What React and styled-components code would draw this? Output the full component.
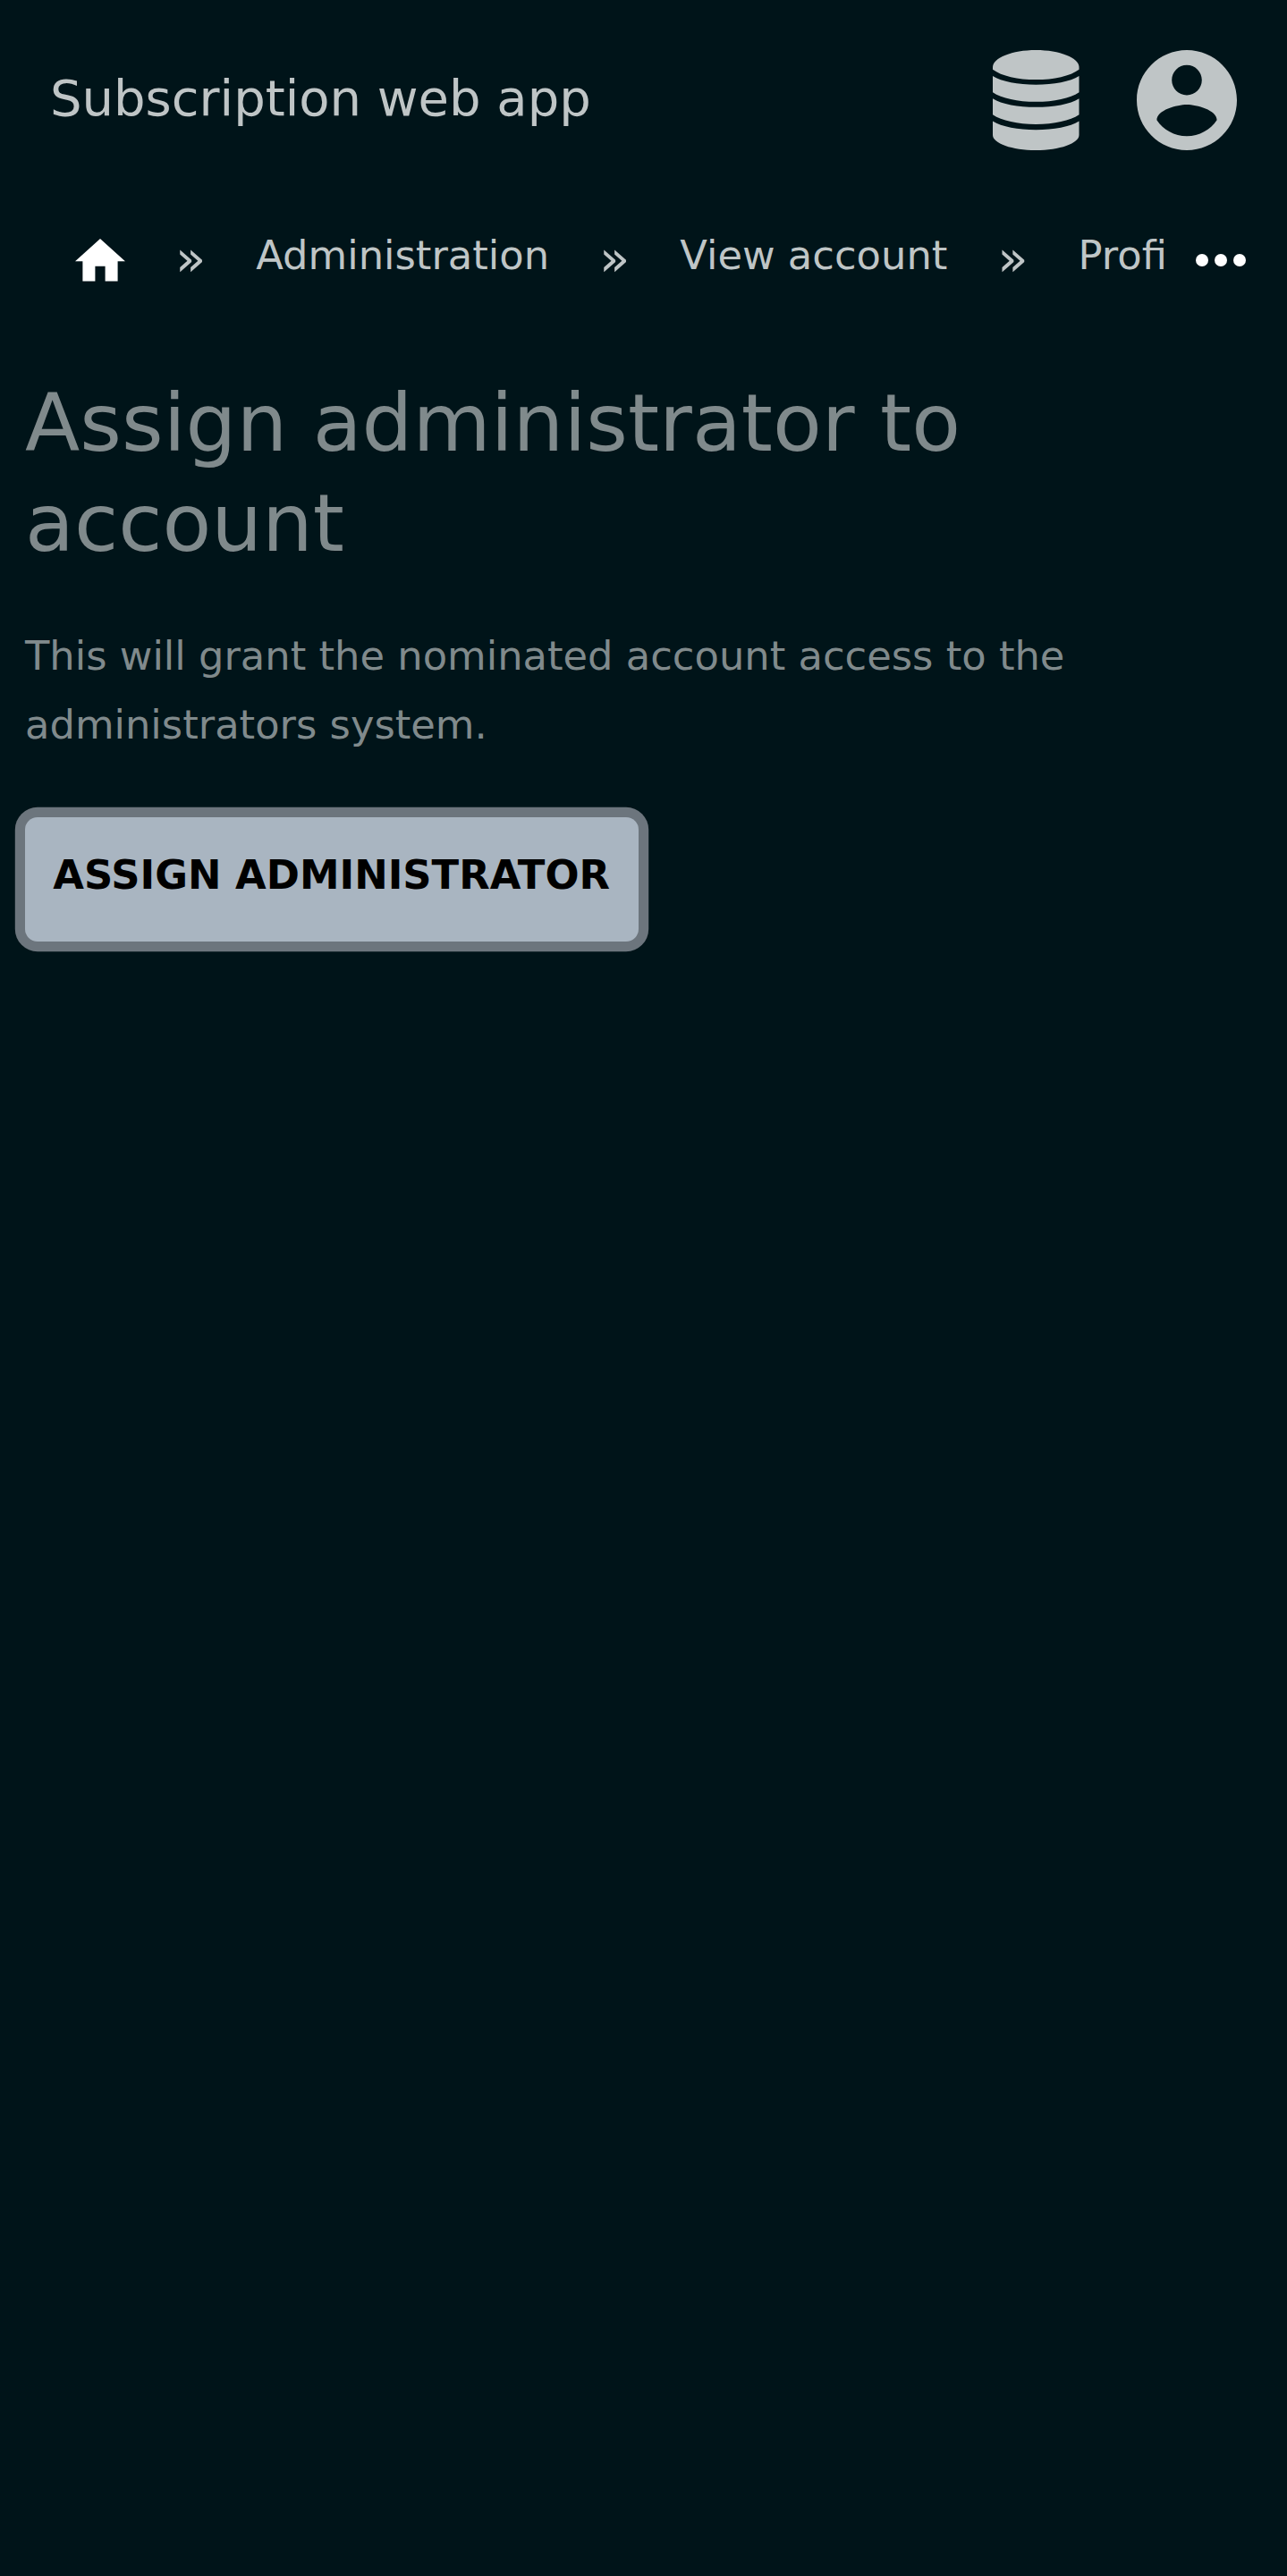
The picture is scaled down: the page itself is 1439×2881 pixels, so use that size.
import React from "react";
import styled, { createGlobalStyle } from "styled-components";

const GlobalStyle = createGlobalStyle`
  *, *::before, *::after { box-sizing: border-box; }
  html { background: #001419; }
  body {
    margin: 0;
    background: #001419;
    color: #808a8c;
    font-family: "DejaVu Sans", sans-serif;
    font-size: 44.8px;
    line-height: 77px;
  }
`;

const Page = styled.div`
  display: flex;
  flex-direction: column;
  min-height: 100vh;
`;

const Header = styled.header`
  display: flex;
  align-items: center;
  justify-content: space-between;
  height: 224px;
  padding: 0 56px;
`;

const Brand = styled.a`
  color: #bfc5c6;
  font-size: 56px;
  line-height: 84px;
  padding-bottom: 5px;
`;

const Actions = styled.div`
  display: flex;
  align-items: center;
  gap: 64.3px;
`;

const IconLink = styled.a`
  display: flex;
  color: #bfc5c6;
`;

const Icon = styled.svg`
  display: block;
  flex: none;
  width: ${(p) => p.$w}px;
  height: ${(p) => p.$h}px;
  fill: currentColor;
`;

const Nav = styled.nav`
  display: flex;
  align-items: center;
  height: 133px;
  padding: 0 46px 0 84px;
`;

const Crumbs = styled.ol`
  display: flex;
  flex: none;
  width: 1224px;
  height: 133px;
  margin: 0;
  padding: 0;
  list-style: none;
  overflow: hidden;
  white-space: nowrap;
`;

const Crumb = styled.li`
  display: flex;
  flex: none;
  color: #bfc5c6;
  line-height: 123px;

  & + &::before {
    content: "»";
    padding: 0 56px;
    font-size: 56px;
    line-height: 130px;
  }
`;

const HomeLink = styled.a`
  padding-top: 43px;
  color: #fff;
`;

const MoreButton = styled.button`
  display: flex;
  flex: none;
  margin-left: 29px;
  padding: 0;
  border: 0;
  background: none;
  color: #fff;
`;

const Main = styled.main`
  padding: 60px 28px 0;
`;

const Heading = styled.h1`
  margin: 0 0 54px;
  font-size: 89.6px;
  font-weight: 400;
  line-height: 112px;
`;

const Text = styled.p`
  margin: 0 0 64.6px;
`;

const Button = styled.button`
  display: block;
  height: 139.6px;
  padding: 0 32px 9.6px 31.36px;
  border: 0;
  border-radius: 14px;
  background: #a9b5c1;
  box-shadow: 0 0 0 11.2px #6c757d;
  color: #000;
  font: 700 44.8px/130px "DejaVu Sans", sans-serif;
  text-transform: uppercase;
`;

export default function App() {
  return (
    <Page>
      <GlobalStyle />
      <Header>
        <Brand>Subscription web app</Brand>
        <Actions>
          <IconLink aria-label="Data">
            <Icon $w={96.5} $h={112} viewBox="0 0 290 335" preserveAspectRatio="none">
              <path d="M0 57C0 26 65 0 145 0s145 26 145 57v8c-30 22-84 34-145 34S30 87 0 65z" />
              <path d="M0 87c30 19 85 29 145 29s115-10 145-29v54c-30 20-84 32-145 32S30 161 0 141z" />
              <path d="M0 162c30 19 85 29 145 29s115-10 145-29v54c-30 20-84 32-145 32S30 236 0 216z" />
              <path d="M0 238c30 19 85 29 145 29s115-10 145-29v46c0 28-65 51-145 51S0 312 0 284z" />
            </Icon>
          </IconLink>
          <IconLink aria-label="Account">
            <Icon $w={112} $h={112} viewBox="2 2 20 20">
              <path d="M12 2C6.48 2 2 6.48 2 12s4.48 10 10 10 10-4.48 10-10S17.52 2 12 2zm0 3c1.66 0 3 1.34 3 3s-1.34 3-3 3-3-1.34-3-3 1.34-3 3-3zm0 14.2c-2.5 0-4.71-1.28-6-3.22.03-1.99 4-3.08 6-3.08 1.99 0 5.97 1.09 6 3.08-1.29 1.94-3.5 3.22-6 3.22z" />
            </Icon>
          </IconLink>
        </Actions>
      </Header>
      <Nav>
        <Crumbs>
          <Crumb>
            <HomeLink aria-label="Home">
              <Icon $w={56} $h={47.6} viewBox="2 3 20 17">
                <path d="M10 20v-6h4v6h5v-8h3L12 3 2 12h3v8z" />
              </Icon>
            </HomeLink>
          </Crumb>
          <Crumb>Administration</Crumb>
          <Crumb>View account</Crumb>
          <Crumb>Profile</Crumb>
        </Crumbs>
        <MoreButton aria-label="More">
          <Icon $w={56} $h={14} viewBox="4 10 16 4">
            <circle cx="6" cy="12" r="2" />
            <circle cx="12" cy="12" r="2" />
            <circle cx="18" cy="12" r="2" />
          </Icon>
        </MoreButton>
      </Nav>
      <Main>
        <Heading>Assign administrator to account</Heading>
        <Text>This will grant the nominated account access to the administrators system.</Text>
        <Button>Assign administrator</Button>
      </Main>
    </Page>
  );
}
